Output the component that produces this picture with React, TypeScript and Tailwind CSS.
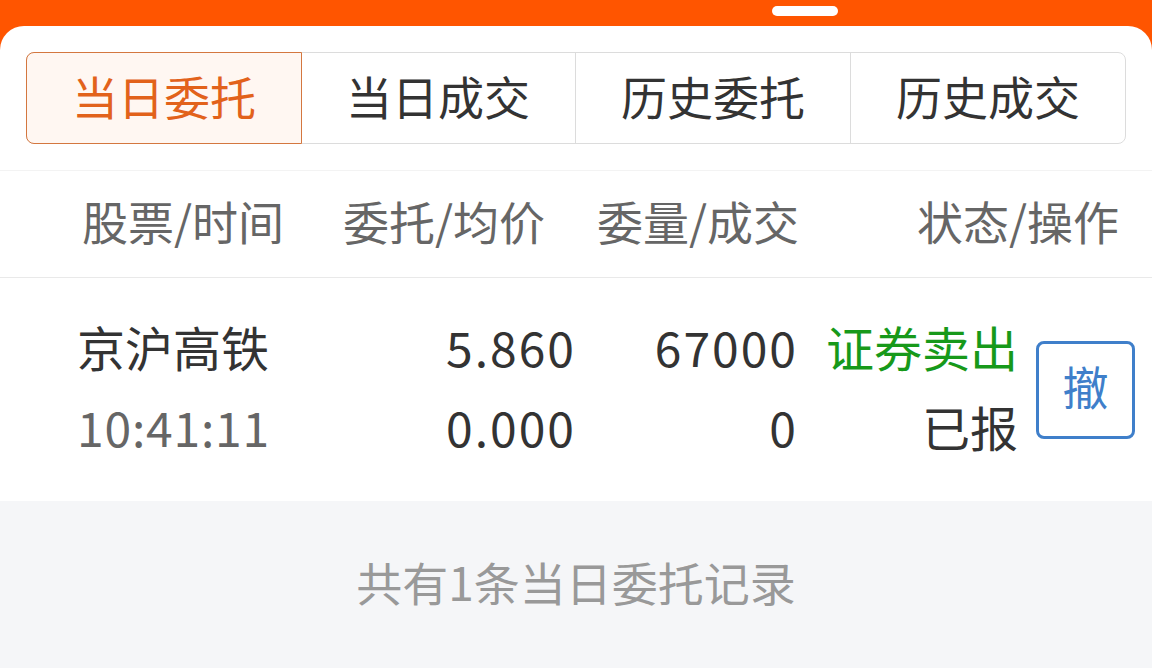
import React from "react";

const font = { fontFamily: '"Noto Sans CJK SC", "Noto Sans", sans-serif' };

export default function App() {
  const tabs = ["当日委托", "当日成交", "历史委托", "历史成交"];
  return (
    <div className="w-[1152px] h-[668px] bg-[#ff5500] overflow-hidden flex flex-col" style={font}>
      <div className="h-[26px] flex shrink-0 pl-[772px]">
        <div className="mt-[6px] w-[66px] h-[10px] rounded-full bg-white" />
      </div>
      <div className="flex-1 bg-white rounded-t-[24px] flex flex-col overflow-hidden">
        <div className="px-[26px] pt-[26px] pb-[26px]">
          <div className="flex h-[92px] border border-[#dcdcdc] rounded-[8px]">
            {tabs.map((t, i) => (
              <div
                key={t}
                className={
                  i === 0
                    ? "flex-1 flex items-center justify-center pb-[6px] bg-[#fff7f2] border border-[#d4773f] rounded-l-[8px] -m-px text-[#e2621b] text-[46px]"
                    : "flex-1 flex items-center justify-center pb-[6px] text-[#333333] text-[46px] border-l border-[#dcdcdc]" +
                      (i === 1 ? " border-l-0" : "")
                }
              >
                {t}
              </div>
            ))}
          </div>
        </div>
        <div className="border-t border-[#f3f3f3] border-b border-b-[#e9e9e9] h-[108px] flex items-center pb-[7px] text-[46px] text-[#666666]">
          <div className="w-[300px] pl-[82px]">股票/时间</div>
          <div className="w-[245px] text-right">委托/均价</div>
          <div className="w-[254px] text-right">委量/成交</div>
          <div className="w-[320px] text-right">状态/操作</div>
        </div>
        <div className="h-[223px] flex items-center pb-[8px] text-[48px] leading-[80px] text-[#333333]">
          <div className="w-[300px] pl-[77px] flex flex-col">
            <div>京沪高铁</div>
            <div className="text-[#666666] tracking-[0.8px]">10:41:11</div>
          </div>
          <div className="w-[276px] text-right flex flex-col tracking-[2px]">
            <div>5.860</div>
            <div>0.000</div>
          </div>
          <div className="w-[222px] text-right flex flex-col tracking-[2px]">
            <div>67000</div>
            <div>0</div>
          </div>
          <div className="w-[220px] text-right flex flex-col">
            <div className="text-[#17991a]">证券卖出</div>
            <div>已报</div>
          </div>
          <div className="ml-[18px] mt-[8px] w-[99px] h-[98px] border-[3px] border-[#3f7fca] rounded-[8px] flex items-center justify-center pb-[10px] text-[#3f7fca] text-[46px]">
            撤
          </div>
        </div>
        <div className="flex-1 bg-[#f5f6f8] flex items-start justify-center pt-[46px] text-[46px] text-[#999999]">
          共有1条当日委托记录
        </div>
      </div>
    </div>
  );
}
